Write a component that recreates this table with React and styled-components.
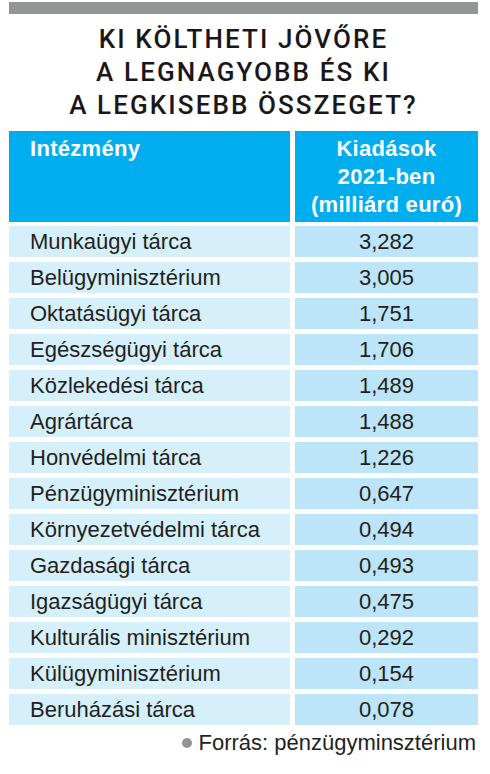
import React from 'react'
import styled, { createGlobalStyle } from 'styled-components'

const rows = [
  ['Munkaügyi tárca', '3,282'],
  ['Belügyminisztérium', '3,005'],
  ['Oktatásügyi tárca', '1,751'],
  ['Egészségügyi tárca', '1,706'],
  ['Közlekedési tárca', '1,489'],
  ['Agrártárca', '1,488'],
  ['Honvédelmi tárca', '1,226'],
  ['Pénzügyminisztérium', '0,647'],
  ['Környezetvédelmi tárca', '0,494'],
  ['Gazdasági tárca', '0,493'],
  ['Igazságügyi tárca', '0,475'],
  ['Kulturális minisztérium', '0,292'],
  ['Külügyminisztérium', '0,154'],
  ['Beruházási tárca', '0,078'],
]

const GlobalStyle = createGlobalStyle`
  body {
    margin: 0;
    background: #fff;
    font-family: "Liberation Sans", Arial, sans-serif;
    color: #231f20;
  }
`

const Page = styled.div`
  width: 469px;
  padding: 2px 12px 0 9px;
`

const TopBar = styled.div`
  height: 12px;
  background: #939598;
`

const Title = styled.h1`
  margin: 9px 0 0;
  font-family: Roboto, "Liberation Sans", sans-serif;
  font-weight: 500;
  font-size: 26px;
  line-height: 33px;
  letter-spacing: 2.1px;
  text-align: center;
  color: #1a1718;
`

const Table = styled.div`
  margin-top: 9px;
  display: flex;
  flex-direction: column;
  gap: 5px;
`

const Row = styled.div`
  display: grid;
  grid-template-columns: 281px 183px;
  column-gap: 5px;
  margin-bottom: ${(p) => (p.$head ? '-1px' : '0')};
`

const HeadCell = styled.div`
  background: #00aeef;
  color: #fff;
  font-weight: 700;
  font-size: 22px;
  line-height: 28px;
  padding: 4px 8px 3px ${(p) => (p.$right ? '8px' : '21px')};
  text-align: ${(p) => (p.$right ? 'center' : 'left')};
  letter-spacing: 0.3px;
`

const Cell = styled.div`
  height: 31px;
  display: flex;
  align-items: center;
  justify-content: ${(p) => (p.$right ? 'center' : 'flex-start')};
  padding-left: ${(p) => (p.$right ? '0' : '21px')};
  background: ${(p) => (p.$right ? '#bce5f9' : '#d5effb')};
  font-size: 22px;
`

const Source = styled.div`
  margin-top: 5px;
  display: flex;
  justify-content: flex-end;
  align-items: center;
  gap: 6px;
  padding-right: 2px;
  font-size: 22px;
`

const Dot = styled.span`
  width: 10px;
  height: 10px;
  border-radius: 50%;
  background: #939598;
`

export default function App() {
  return (
    <Page>
      <GlobalStyle />
      <TopBar />
      <Title>
        KI KÖLTHETI JÖVŐRE
        <br />
        A LEGNAGYOBB ÉS KI
        <br />
        A LEGKISEBB ÖSSZEGET?
      </Title>
      <Table>
        <Row $head>
          <HeadCell>Intézmény</HeadCell>
          <HeadCell $right>
            Kiadások
            <br />
            2021-ben
            <br />
            (milliárd euró)
          </HeadCell>
        </Row>
        {rows.map(([name, value]) => (
          <Row key={name}>
            <Cell>{name}</Cell>
            <Cell $right>{value}</Cell>
          </Row>
        ))}
      </Table>
      <Source>
        <Dot />
        Forrás: pénzügyminsztérium
      </Source>
    </Page>
  )
}
